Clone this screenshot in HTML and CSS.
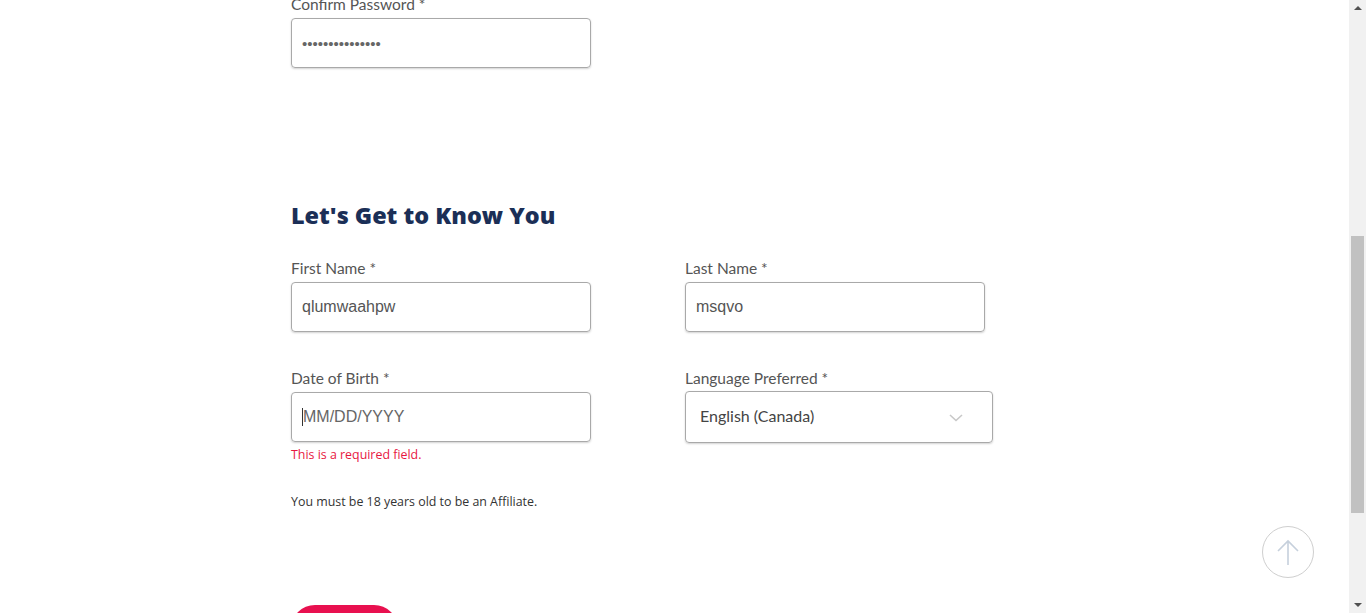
FILE: index.html
```html
<!DOCTYPE html>
<html lang="en">
<head>
<meta charset="utf-8">
<title>Affiliate Sign Up</title>
<link rel="stylesheet" href="styles.css">
</head>
<body>
<div class="window">
  <main class="page">
    <div class="field field-first">
      <label class="label">Confirm Password *</label>
      <div class="input"><span class="dots">•••••••••••••••</span></div>
    </div>

    <h2 class="heading">Let's Get to Know You</h2>

    <div class="grid">
      <div class="field">
        <label class="label">First Name *</label>
        <div class="input"><span class="value">qlumwaahpw</span></div>
      </div>
      <div class="field">
        <label class="label">Last Name *</label>
        <div class="input"><span class="value">msqvo</span></div>
      </div>
      <div class="field">
        <label class="label">Date of Birth *</label>
        <div class="input"><span class="caret"></span><span class="placeholder">MM/DD/YYYY</span></div>
        <div class="error">This is a required field.</div>
      </div>
      <div class="field">
        <label class="label">Language Preferred *</label>
        <div class="select">
          <span class="select-value">English (Canada)</span>
          <svg class="chevron" width="14" height="8" viewBox="0 0 14 8"><path d="M1 1l6 5.5L13 1" fill="none" stroke="#c8c8c8" stroke-width="1.6"/></svg>
        </div>
      </div>
    </div>

    <p class="note">You must be 18 years old to be an Affiliate.</p>

    <button class="submit" type="button"></button>

    <div class="to-top">
      <svg width="24" height="26" viewBox="0 0 24 26"><path d="M12 2v24M2 12L12 2l10 10" fill="none" stroke="#c6d0dc" stroke-width="1.6"/></svg>
    </div>
  </main>
  <div class="scrollbar">
    <span class="arrow-up"></span>
    <div class="track"><div class="thumb"></div></div>
    <span class="arrow-down"></span>
  </div>
</div>
</body>
</html>
```

FILE: styles.css
```css
html, body {
  margin: 0;
  padding: 0;
  height: 613px;
  overflow: hidden;
  background: #fff;
}

.window {
  display: flex;
  height: 613px;
  overflow: hidden;
}

.page {
  flex: 1;
  position: relative;
  padding-left: 291px;
  font-family: Lato, "Liberation Sans", sans-serif;
}

.field {
  display: flex;
  flex-direction: column;
}

.field-first {
  margin-top: -5px;
  width: 300px;
}

.label {
  font-size: 15.5px;
  line-height: 18px;
  color: #555;
  margin-bottom: 5px;
}

.input {
  box-sizing: border-box;
  width: 300px;
  height: 50px;
  border: 1px solid #a9a9a9;
  border-radius: 4px;
  box-shadow: 0 1px 2px rgba(0,0,0,0.18);
  display: flex;
  align-items: center;
  padding-left: 10px;
  font-family: "Liberation Sans", Arial, sans-serif;
  font-size: 16px;
  color: #555;
}

.dots {
  font-size: 15px;
  color: #666;
}

.value {
  color: #555;
}

.placeholder {
  color: #666;
}

.caret {
  width: 1px;
  height: 18px;
  background: #333;
}

.heading {
  margin: 132px 0 0;
  font-family: "Open Sans", sans-serif;
  font-weight: 800;
  font-size: 23.4px;
  line-height: 30px;
  color: #1b2f57;
}

.grid {
  margin-top: 29px;
  display: grid;
  grid-template-columns: 300px 308px;
  column-gap: 94px;
  row-gap: 37px;
  align-items: start;
}

.select {
  box-sizing: border-box;
  width: 308px;
  height: 52px;
  margin-top: -1px;
  border: 1px solid #a9a9a9;
  border-radius: 4px;
  box-shadow: 0 1px 2px rgba(0,0,0,0.18);
  display: flex;
  align-items: center;
  justify-content: space-between;
  padding: 0 29px 3px 14px;
  font-size: 16px;
  color: #444;
}

.chevron {
  margin-top: 4px;
}

.error {
  margin-top: 5px;
  font-family: "Open Sans", sans-serif;
  font-size: 12.4px;
  line-height: 16px;
  color: #e8173f;
}

.note {
  margin: 31px 0 0;
  font-family: "Open Sans", sans-serif;
  font-size: 12.4px;
  line-height: 16px;
  color: #333;
}

.submit {
  display: block;
  margin-top: 95px;
  width: 107px;
  height: 48px;
  border: none;
  border-radius: 24px;
  background: #e8104f;
}

.to-top {
  position: absolute;
  left: 1262px;
  top: 526px;
  width: 52px;
  height: 52px;
  box-sizing: border-box;
  border: 1px solid #cfcfcf;
  border-radius: 50%;
  display: flex;
  align-items: center;
  justify-content: center;
}

.scrollbar {
  width: 17px;
  background: #f1f1f1;
  display: flex;
  flex-direction: column;
  align-items: center;
}

.arrow-up, .arrow-down {
  width: 0;
  height: 0;
  border-left: 4px solid transparent;
  border-right: 4px solid transparent;
  flex: none;
}

.arrow-up {
  margin-top: 6px;
  border-bottom: 4px solid #505050;
}

.arrow-down {
  margin-bottom: 6px;
  border-top: 4px solid #505050;
}

.track {
  flex: 1;
  width: 100%;
  display: flex;
  justify-content: center;
}

.thumb {
  width: 13px;
  height: 277px;
  margin-top: 226px;
  background: #c1c1c1;
}
```
